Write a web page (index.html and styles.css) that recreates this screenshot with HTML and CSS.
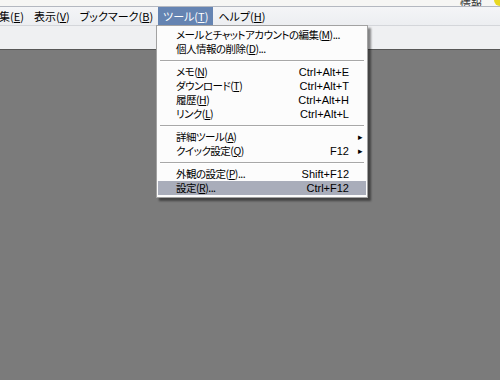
FILE: index.html
```html
<!DOCTYPE html>
<html>
<head>
<meta charset="utf-8">
<link rel="stylesheet" href="styles.css">
</head>
<body>

<div class="topStrip">
   <span class="topText">情報</span>
   <span class="topIcon"></span>
</div>

<div class="menuBar">
   <span class="barItem first">編集(<u>E</u>)</span>
   <span class="barItem">表示(<u>V</u>)</span>
   <span class="barItem">ブックマーク(<u>B</u>)</span>
   <span class="barItem active">ツール(<u>T</u>)</span>
   <span class="barItem">ヘルプ(<u>H</u>)</span>
</div>

<div class="toolBar"></div>

<div class="content"></div>

<!-- tools dropdown -->
<div class="dropMenu">
   <div class="row"><span class="label">メールとチャットアカウントの編集(<u>M</u>)...</span><span class="key"></span><span class="arrow"></span></div>
   <div class="row"><span class="label">個人情報の削除(<u>D</u>)...</span><span class="key"></span><span class="arrow"></span></div>
   <div class="sep"></div>
   <div class="row"><span class="label">メモ(<u>N</u>)</span><span class="key">Ctrl+Alt+E</span><span class="arrow"></span></div>
   <div class="row"><span class="label">ダウンロード(<u>T</u>)</span><span class="key">Ctrl+Alt+T</span><span class="arrow"></span></div>
   <div class="row"><span class="label">履歴(<u>H</u>)</span><span class="key">Ctrl+Alt+H</span><span class="arrow"></span></div>
   <div class="row"><span class="label">リンク(<u>L</u>)</span><span class="key">Ctrl+Alt+L</span><span class="arrow"></span></div>
   <div class="sep"></div>
   <div class="row"><span class="label">詳細ツール(<u>A</u>)</span><span class="key"></span><span class="arrow">&#9656;</span></div>
   <div class="row"><span class="label">クイック設定(<u>Q</u>)</span><span class="key">F12</span><span class="arrow">&#9656;</span></div>
   <div class="sep"></div>
   <div class="row"><span class="label">外観の設定(<u>P</u>)...</span><span class="key">Shift+F12</span><span class="arrow"></span></div>
   <div class="row selected"><span class="label">設定(<u>R</u>)...</span><span class="key">Ctrl+F12</span><span class="arrow"></span></div>
</div>

</body>
</html>
```

FILE: styles.css
```css
body
{
   margin: 0;
   background: #7b7b7b;
   font-family: "Noto Sans CJK JP", "Liberation Sans", sans-serif;
   font-size: 11px;
   color: #000;
   font-feature-settings: "palt";
}

u
{
   text-decoration: underline;
   text-underline-offset: 1px;
}

.topStrip
{
   height: 6px;
   overflow: hidden;
   background: #f6f6f4;
   border-bottom: 1px solid #b4b8c0;
   display: flex;
   justify-content: flex-end;
   align-items: flex-start;
}

.topText
{
   font-size: 11px;
   line-height: 8px;
   margin-right: 12px;
   color: #333;
}

.topIcon
{
   width: 12px;
   height: 12px;
   border-radius: 50%;
   background: #e8d820;
   margin-top: -6px;
   margin-right: -6px;
}

.menuBar
{
   height: 18px;
   display: flex;
   align-items: stretch;
   background: linear-gradient(#f4f5f7, #eceef1);
   border-bottom: 1px solid #d4d6da;
   white-space: nowrap;
}

.barItem
{
   display: flex;
   align-items: center;
   padding: 0 5px;
   line-height: 18px;
}

.barItem.first
{
   margin-left: -17px;
}

.barItem.active
{
   background: #6584b2;
   color: #fff;
}

.toolBar
{
   height: 23px;
   background: #eff0f2;
   border-bottom: 1px solid #575757;
}

.dropMenu
{
   position: absolute;
   left: 156px;
   top: 25px;
   width: 208px;
   padding: 2px 1px;
   background: #fcfcfc;
   border: 1px solid #a2a2a2;
   box-shadow: 3px 3px 2px rgba(0,0,0,0.45);
   font-size: 10.5px;
   letter-spacing: -0.5px;
   white-space: nowrap;
}

.row
{
   display: grid;
   grid-template-columns: 1fr auto 17px;
   align-items: center;
   height: 14px;
   line-height: 14px;
   padding-left: 18px;
}

.row.selected
{
   background: #a9adba;
}

.key
{
   text-align: right;
   font-family: "Liberation Sans", sans-serif;
   font-size: 11px;
   letter-spacing: 0;
}

.arrow
{
   font-size: 9px;
   text-align: right;
   padding-right: 3px;
   letter-spacing: 0;
}

.sep
{
   height: 0;
   margin: 4px 2px 3px;
   border-top: 1px solid #a8a8a8;
   border-bottom: 1px solid #fff;
}
```
